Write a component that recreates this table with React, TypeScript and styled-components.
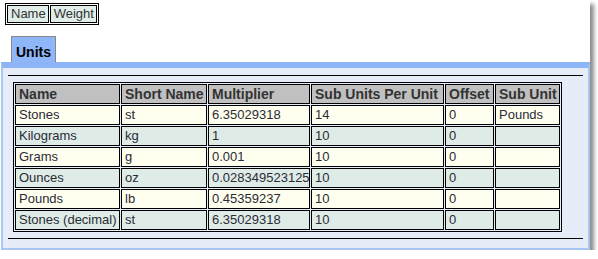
import styled, { createGlobalStyle } from "styled-components";

const GlobalStyle = createGlobalStyle`
  body {
    margin: 0;
    background: #fff;
    font-family: "Liberation Sans", Arial, sans-serif;
  }
`;

const Window = styled.div`
  width: 590px;
  height: 250px;
  box-sizing: border-box;
  display: flex;
  flex-direction: column;
  background: #fff;
  box-shadow: 4px 4px 4px rgba(0, 0, 0, 0.45);
`;

const FieldBar = styled.div`
  padding: 3px 0 0 5px;
`;

const FieldTable = styled.table`
  border: 1px solid #000;
  border-spacing: 1px;
  font-size: 13px;
  color: #333;
`;

const FieldCell = styled.td`
  border: 1px solid #000;
  background: #e0ede8;
  padding: 0 2px 0 3px;
  line-height: 16px;
  white-space: nowrap;
`;

const TabStrip = styled.div`
  display: flex;
  padding: 11px 0 0 11px;
`;

const Tab = styled.div`
  border: 1px solid #888;
  border-bottom: none;
  background: #8fb6f8;
  padding: 7px 4px 2px;
  font-size: 14px;
  font-weight: bold;
  line-height: 16px;
  color: #000;
`;

const Panel = styled.div`
  flex: 1;
  margin-left: 1px;
  box-sizing: border-box;
  border-top: 6px solid #8cb4f6;
  border-left: 2px solid #a7c6f1;
  border-right: 2px solid #a7c6f1;
  border-bottom: 2px solid #a7c6f1;
  background: #e6edf8;
  padding: 7px 5px 0;
`;

const Rule = styled.div`
  border-top: 1px solid #000;
`;

const UnitTable = styled.table`
  table-layout: fixed;
  width: 549px;
  margin: 6px 0 6px 5px;
  border: 1px solid #000;
  border-spacing: 1px;
  font-size: 13px;
`;

const Head = styled.th<{ $w: number }>`
  width: ${(p) => p.$w - 8}px;
  border: 1px solid #000;
  background: #c0c0c0;
  color: #333;
  font-size: 14px;
  text-align: left;
  padding: 0 3px;
  line-height: 18px;
  white-space: nowrap;
`;

const Row = styled.tr<{ $alt: boolean }>`
  background: ${(p) => (p.$alt ? "#deebe7" : "#fffff0")};
`;

const Cell = styled.td`
  border: 1px solid #000;
  color: #2b2b35;
  padding: 0 3px;
  line-height: 18px;
  white-space: nowrap;
`;

const columns: [string, number][] = [
  ["Name", 105],
  ["Short Name", 86],
  ["Multiplier", 102],
  ["Sub Units Per Unit", 133],
  ["Offset", 49],
  ["Sub Unit", 65],
];

const units = [
  ["Stones", "st", "6.35029318", "14", "0", "Pounds"],
  ["Kilograms", "kg", "1", "10", "0", ""],
  ["Grams", "g", "0.001", "10", "0", ""],
  ["Ounces", "oz", "0.028349523125", "10", "0", ""],
  ["Pounds", "lb", "0.45359237", "10", "0", ""],
  ["Stones (decimal)", "st", "6.35029318", "10", "0", ""],
];

export default function App() {
  return (
    <>
      <GlobalStyle />
      <Window>
        <FieldBar>
          <FieldTable>
            <tbody>
              <tr>
                <FieldCell>Name</FieldCell>
                <FieldCell>Weight</FieldCell>
              </tr>
            </tbody>
          </FieldTable>
        </FieldBar>
        <TabStrip>
          <Tab>Units</Tab>
        </TabStrip>
        <Panel>
          <Rule />
          <UnitTable>
            <thead>
              <tr>
                {columns.map(([label, w]) => (
                  <Head key={label} $w={w}>
                    {label}
                  </Head>
                ))}
              </tr>
            </thead>
            <tbody>
              {units.map((u, i) => (
                <Row key={u[0]} $alt={i % 2 === 1}>
                  {u.map((v, j) => (
                    <Cell key={j}>{v}</Cell>
                  ))}
                </Row>
              ))}
            </tbody>
          </UnitTable>
          <Rule />
        </Panel>
      </Window>
    </>
  );
}
